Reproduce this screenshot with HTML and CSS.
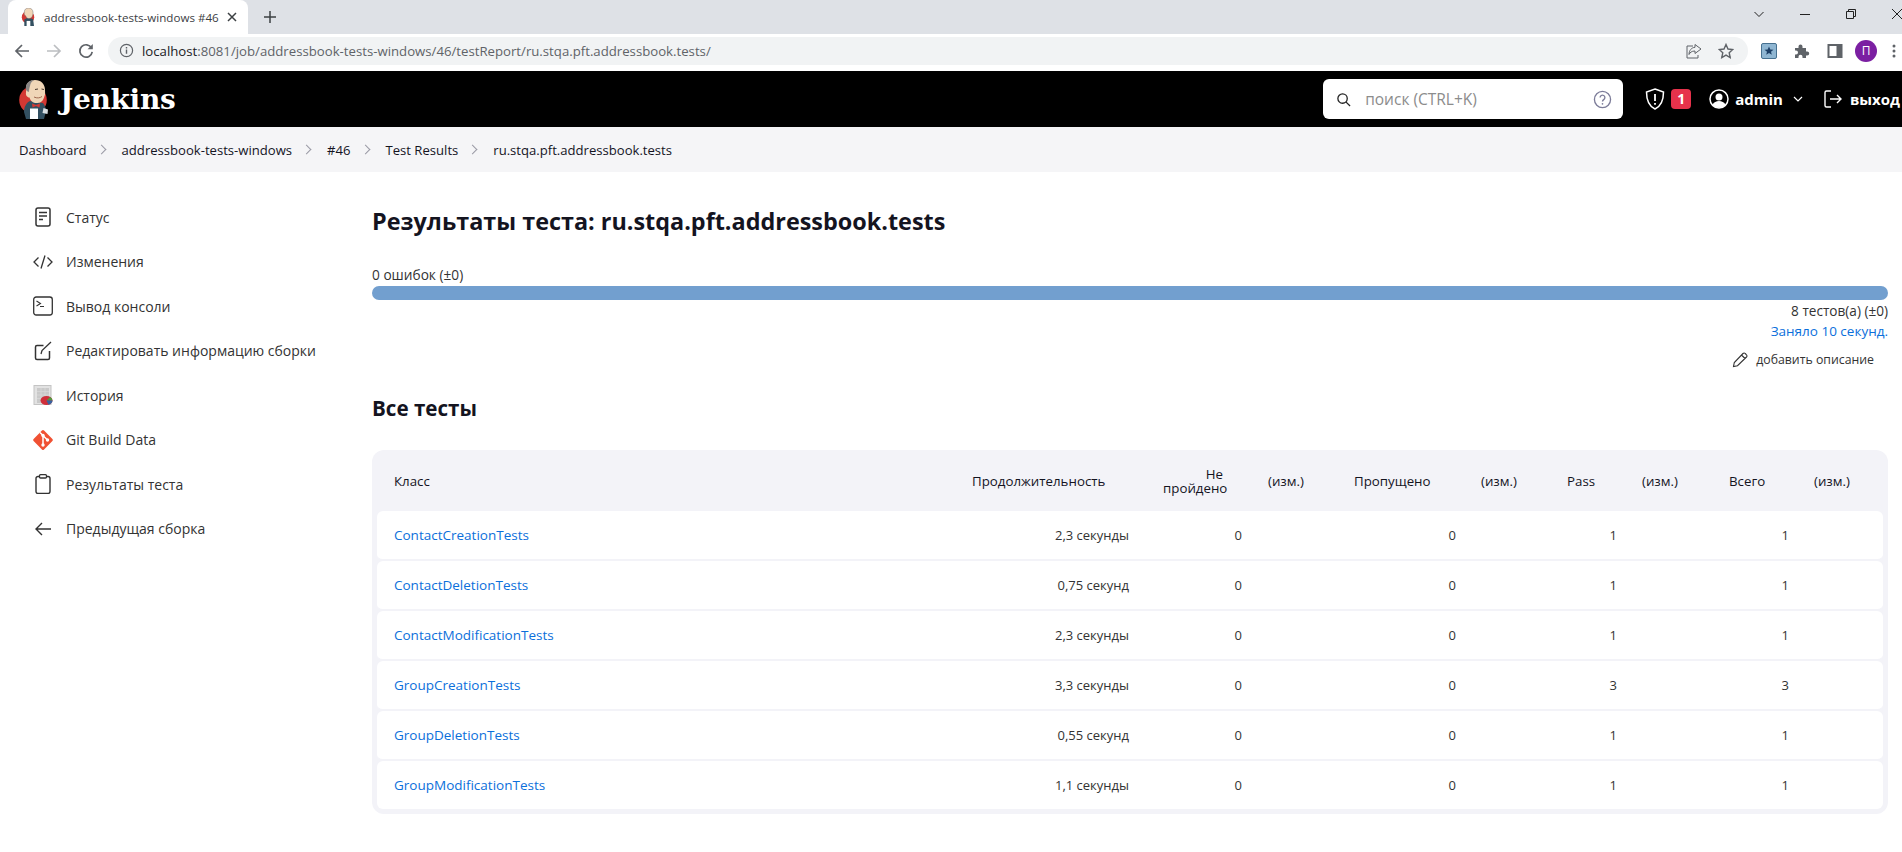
FILE: index.html
```html
<!DOCTYPE html>
<html lang="ru">
  <head>
    <meta charset="UTF-8" />
    <meta name="viewport" content="width=device-width, initial-scale=1.0" />
    <title>addressbook-tests-windows #46</title>
    <link rel="stylesheet" href="styles.css">
  </head>

  <body>
    <!-- browser tab strip -->
    <div class="tabstrip">
      <div class="tab">
        <svg class="favicon" viewBox="0 0 28 39">
          <circle cx="14" cy="20" r="13.500" fill="#d33833"/>
          <path d="M6 39V25l7-4 12 3 2 15z" fill="#335061"/>
          <path d="M6 9c0-6 4-9 9-9 6 0 10 4 10 10 0 7-3 13-9 13-4 0-6-3-7-6-2 0-4-4-3-8z" fill="#f0d6b7" stroke="#6d6b6d"/>
          <path d="M11 28h8v11h-8z" fill="#fff"/>
        </svg>
        <span class="tab-title">addressbook-tests-windows #46</span>
        <svg class="tab-close" viewBox="0 0 10 10"><path d="M1 1l8 8M9 1l-8 8" stroke="#3c4043" stroke-width="1.500"/></svg>
      </div>
      <svg class="tab-new" viewBox="0 0 12 12"><path d="M6 0v12M0 6h12" stroke="#3c4043" stroke-width="1.500"/></svg>
      <div class="window-btns">
        <svg viewBox="0 0 12 12"><path d="M1.500 4L6 8.500 10.500 4" fill="none" stroke="#222"/></svg>
        <svg viewBox="0 0 12 12"><path d="M1 6.500h10" stroke="#222"/></svg>
        <svg viewBox="0 0 12 12"><path d="M1.500 3.500h7v7h-7zM3.500 3.500v-2h7v7h-2" fill="none" stroke="#222"/></svg>
        <svg viewBox="0 0 12 12"><path d="M1 1l10 10M11 1L1 11" stroke="#222"/></svg>
      </div>
    </div>

    <!-- browser toolbar -->
    <div class="toolbar">
      <svg class="nav-btn" viewBox="0 0 16 16"><path d="M15 8H2M8 2L2 8l6 6" fill="none" stroke="#5f6368" stroke-width="1.700"/></svg>
      <svg class="nav-btn" viewBox="0 0 16 16"><path d="M1 8h13M8 2l6 6-6 6" fill="none" stroke="#bcbec1" stroke-width="1.700"/></svg>
      <svg class="nav-btn" viewBox="0 0 16 16"><path d="M13.500 5A6.200 6.200 0 1 0 14.200 8.800" fill="none" stroke="#5f6368" stroke-width="1.700"/><path d="M14.800 1v5.200H9.600z" fill="#5f6368"/></svg>
      <div class="urlbar">
        <svg class="info-icon" viewBox="0 0 16 16"><circle cx="8" cy="8" r="6.500" fill="none" stroke="#5f6368" stroke-width="1.300"/><path d="M8 7v4.500M8 4.300v1.500" stroke="#5f6368" stroke-width="1.500"/></svg>
        <span class="url"><b>localhost</b>:8081/job/addressbook-tests-windows/46/testReport/ru.stqa.pft.addressbook.tests/</span>
        <svg class="url-action" viewBox="0 0 16 16"><path d="M9 1.500L15 6l-6 4.500V8C5.500 8 4 9.500 3 11.500 3 7.500 5.500 4.500 9 4.300zM7 3H1v12h11v-3" fill="none" stroke="#5f6368"/></svg>
        <svg class="url-action" viewBox="0 0 16 16"><path d="M8 1.500l2 4.500 4.800.5-3.600 3.200 1 4.800L8 12.100l-4.200 2.400 1-4.800L1.200 6.500 6 6z" fill="none" stroke="#5f6368" stroke-width="1.400"/></svg>
      </div>
      <div class="ext-icons">
        <svg viewBox="0 0 16 16"><rect x=".5" y=".5" width="15" height="15" rx="1.500" fill="#8fb6d2" stroke="#46708f"/><path d="M8 3.500l1.300 3 3.200.2-2.500 2 .8 3.100L8 10.100l-2.800 1.700.8-3.100-2.500-2 3.200-.2z" fill="#1d3f66"/></svg>
        <svg viewBox="0 0 16 16"><path d="M1 5h3.500V3.500a2 2 0 0 1 4 0V5H12v3.500h1.200a2 2 0 0 1 0 4H12V15H8.500v-1.300a2 2 0 0 0-4 0V15H1v-3.500h1a2 2 0 0 0 0-4H1z" fill="#5f6368"/></svg>
        <svg viewBox="0 0 16 16"><path d="M1.500 2h13v12h-13z" fill="#fff" stroke="#5f6368" stroke-width="2"/><path d="M9.500 2h5v12h-5z" fill="#5f6368"/></svg>
        <span class="avatar">П</span>
        <svg class="dots" viewBox="0 0 4 16"><circle cx="2" cy="3" r="1.500" fill="#5f6368"/><circle cx="2" cy="8" r="1.500" fill="#5f6368"/><circle cx="2" cy="13" r="1.500" fill="#5f6368"/></svg>
      </div>
    </div>

    <!-- jenkins header -->
    <header class="page-header">
      <svg class="logo" viewBox="0 0 30 39">
        <circle cx="14" cy="20" r="13.800" fill="#d33833"/>
        <path d="M5 32c0-5 2-9 6-11l5 1 8 1c2 3 3 5 3 8l-2 8H7z" fill="#335061"/>
        <path d="M7 8C7 3 11 0 16 0c6 0 10 4 10 10 0 3 .5 4-.5 6-1 4-3 7-7 7-4 .5-7-2-8-5.500-2.500 0-4-2.500-3.500-5 0-1.500 0-3 .5-4.500z" fill="#f0d6b7"/>
        <path d="M7 9.500C6 4 10 0 15 0c-2.500 1.500-3.500 3-4 6-.5 1.500-1 4-1 6-1.500-.5-2.500-1-3-2.500z" fill="#8a8684"/>
        <path d="M16 9.500l3-.5M22.500 9l2.500.5" stroke="#4a3b30" stroke-width="1" fill="none"/>
        <path d="M15 17c3 1.500 6 1 8-.5" stroke="#a06a50" stroke-width="1" fill="none"/>
        <path d="M13 23.500l4 1.500 4-1.500-.5 4-3.500-1.500-3.500 1.500z" fill="#d33833"/>
        <path d="M11 28.500h8v10.500h-8z" fill="#fff"/>
        <path d="M24.500 28l4.500 1.500-.5 4.500-5-1z" fill="#d8dde0"/>
      </svg>
      <span class="logo-text">Jenkins</span>
      <div class="search">
        <svg class="search-icon" viewBox="0 0 16 16"><circle cx="7" cy="7" r="5" fill="none" stroke="#222" stroke-width="1.400"/><path d="M10.500 10.500L15 15" stroke="#222" stroke-width="1.400"/></svg>
        <span class="search-hint">поиск (CTRL+K)</span>
        <svg class="help-icon" viewBox="0 0 20 20"><circle cx="10" cy="10" r="8.500" fill="none" stroke="#7c7c99" stroke-width="1.400"/><path d="M7.500 8a2.500 2.500 0 1 1 3.800 2.100c-.9.600-1.300 1-1.300 2" fill="none" stroke="#7c7c99" stroke-width="1.400"/><circle cx="10" cy="14.500" r=".9" fill="#7c7c99"/></svg>
      </div>
      <svg class="head-icon shield" viewBox="0 0 20 22"><path d="M10 1l8.500 3c0 8-2 14-8.500 17C3.500 18 1.500 12 1.500 4z" fill="none" stroke="#fff" stroke-width="1.500"/><path d="M10 6v7M10 15v1.800" stroke="#fff" stroke-width="1.800"/></svg>
      <span class="badge">1</span>
      <svg class="head-icon user-icon" viewBox="0 0 20 20"><circle cx="10" cy="10" r="9" fill="none" stroke="#fff" stroke-width="1.500"/><circle cx="10" cy="8" r="3.500" fill="#fff"/><path d="M3.500 16c1-3 4-4 6.500-4s5.500 1 6.500 4c-3 3.500-10 3.500-13 0z" fill="#fff"/></svg>
      <span class="head-link">admin</span>
      <svg class="user-chevron" viewBox="0 0 10 6"><path d="M1 1l4 4 4-4" fill="none" stroke="#fff" stroke-width="1.200"/></svg>
      <svg class="head-icon logout-icon" viewBox="0 0 20 20"><path d="M8 2H3.500A1.500 1.500 0 0 0 2 3.500v13A1.500 1.500 0 0 0 3.500 18H8M7 10h11M14 6l4 4-4 4" fill="none" stroke="#fff" stroke-width="1.400"/></svg>
      <span class="head-link logout-text">выход</span>
    </header>

    <!-- breadcrumbs -->
    <nav class="breadcrumbs">
      <span>Dashboard</span><i class="crumb-sep"></i>
      <span>addressbook-tests-windows</span><i class="crumb-sep"></i>
      <span>#46</span><i class="crumb-sep"></i>
      <span>Test Results</span><i class="crumb-sep"></i>
      <span>ru.stqa.pft.addressbook.tests</span>
    </nav>

    <div class="page-body">
      <!-- side panel -->
      <aside class="sidebar">
        <div class="task">
          <svg viewBox="0 0 20 20"><rect x="3" y="1" width="14" height="18" rx="2" fill="none" stroke="#333" stroke-width="1.500"/><path d="M6 5.500h8M6 9h8M6 12.500h4" stroke="#333" stroke-width="1.300"/></svg>
          <span>Статус</span>
        </div>
        <div class="task">
          <svg viewBox="0 0 20 20"><path d="M5.500 5.500L1 10l4.500 4.500M14.500 5.500L19 10l-4.500 4.500M12 3.500L8 16.500" fill="none" stroke="#333" stroke-width="1.300"/></svg>
          <span>Изменения</span>
        </div>
        <div class="task">
          <svg viewBox="0 0 20 20"><rect x="0.700" y="1" width="18.600" height="18" rx="2.500" fill="none" stroke="#333" stroke-width="1.300"/><path d="M3.500 5l4 2.500-4 2.500M7 10.500h4" fill="none" stroke="#333" stroke-width="1.100"/></svg>
          <span>Вывод консоли</span>
        </div>
        <div class="task">
          <svg viewBox="0 0 20 20"><path d="M10.500 4.500H4a1.500 1.500 0 0 0-1.500 1.500v11A1.500 1.500 0 0 0 4 18.500h11a1.500 1.500 0 0 0 1.500-1.500v-7" fill="none" stroke="#333" stroke-width="1.500"/><path d="M8 13l1-3.500L18 1" fill="none" stroke="#333" stroke-width="1.300"/></svg>
          <span>Редактировать информацию сборки</span>
        </div>
        <div class="task">
          <svg viewBox="0 0 20 20"><rect x="1" y="0.500" width="17" height="19" fill="#e2e2e2" stroke="#c4c4c4"/><rect x="4" y="3" width="12" height="15" fill="#c9c9c9"/><path d="M4 6.500h12M4 10h12M4 13.500h12M8 3v15M12 3v15" stroke="#dadada" stroke-width=".7"/><ellipse cx="13.500" cy="15.500" rx="6" ry="4.500" fill="#cf2f3a"/><path d="M13.500 15.500L17 11.900A6 4.500 0 0 1 19.500 15.500z" fill="#4f9a3f"/><path d="M13.500 15.500h6A6 4.500 0 0 1 15.500 19.700z" fill="#3465a4"/></svg>
          <span>История</span>
        </div>
        <div class="task task-git">
          <svg viewBox="0 0 22 22"><rect x="3.600" y="3.600" width="14.800" height="14.800" rx="1.500" fill="#f05133" transform="rotate(45 11 11)"/><path d="M8 3.500L15.500 11M11 6.500V16" fill="none" stroke="#fff" stroke-width="1.500"/><circle cx="11" cy="6.500" r="1.700" fill="#fff"/><circle cx="11" cy="16" r="1.700" fill="#fff"/><circle cx="15.500" cy="11" r="1.700" fill="#fff"/></svg>
          <span>Git Build Data</span>
        </div>
        <div class="task">
          <svg viewBox="0 0 20 20"><path d="M6.500 2.500H5A2 2 0 0 0 3 4.500v13a2 2 0 0 0 2 2h10a2 2 0 0 0 2-2v-13a2 2 0 0 0-2-2h-1.500" fill="none" stroke="#333" stroke-width="1.400"/><rect x="6.500" y="0.700" width="7" height="3.300" rx="1" fill="none" stroke="#333" stroke-width="1.300"/></svg>
          <span>Результаты теста</span>
        </div>
        <div class="task">
          <svg viewBox="0 0 20 20"><path d="M18 10H3M9 4l-6 6 6 6" fill="none" stroke="#333" stroke-width="1.400"/></svg>
          <span>Предыдущая сборка</span>
        </div>
      </aside>

      <!-- main content -->
      <main class="content">
        <h1 class="title">Результаты теста: ru.stqa.pft.addressbook.tests</h1>
        <div class="fail-count">0 ошибок (±0)</div>
        <div class="bar"></div>
        <div class="summary">8 тестов(а) (±0)</div>
        <div class="summary"><a class="link" href="#">Заняло 10 секунд.</a></div>
        <div class="description">
          <svg viewBox="0 0 16 16"><path d="M1.500 14.500l.8-4L11 1.500a1.500 1.500 0 0 1 2.200 0l1.300 1.300a1.500 1.500 0 0 1 0 2.200l-9 8.700zM9.500 3l3.500 3.500" fill="none" stroke="#333" stroke-width="1.100"/></svg>
          <span>добавить описание</span>
        </div>

        <h2 class="subtitle">Все тесты</h2>

        <div class="table-wrap">
          <table class="results">
            <colgroup>
              <col class="c-name" /><col class="c-dur" /><col class="c-fail" /><col class="c-diff1" />
              <col class="c-skip" /><col class="c-diff2" /><col class="c-pass" /><col class="c-diff3" />
              <col class="c-total" /><col class="c-diff4" />
            </colgroup>
            <thead>
              <tr>
                <th class="th-name">Класс</th>
                <th>Продолжительность</th>
                <th class="th-fail">Не пройдено</th>
                <th>(изм.)</th>
                <th>Пропущено</th>
                <th>(изм.)</th>
                <th>Pass</th>
                <th>(изм.)</th>
                <th>Всего</th>
                <th>(изм.)</th>
              </tr>
            </thead>
            <tbody>
              <tr>
                <td class="td-name"><a class="link" href="#">ContactCreationTests</a></td>
                <td class="td-dur">2,3 секунды</td><td class="num-fail">0</td><td></td>
                <td class="num">0</td><td></td><td class="num">1</td><td></td><td class="num">1</td><td></td>
              </tr>
              <tr>
                <td class="td-name"><a class="link" href="#">ContactDeletionTests</a></td>
                <td class="td-dur">0,75 секунд</td><td class="num-fail">0</td><td></td>
                <td class="num">0</td><td></td><td class="num">1</td><td></td><td class="num">1</td><td></td>
              </tr>
              <tr>
                <td class="td-name"><a class="link" href="#">ContactModificationTests</a></td>
                <td class="td-dur">2,3 секунды</td><td class="num-fail">0</td><td></td>
                <td class="num">0</td><td></td><td class="num">1</td><td></td><td class="num">1</td><td></td>
              </tr>
              <tr>
                <td class="td-name"><a class="link" href="#">GroupCreationTests</a></td>
                <td class="td-dur">3,3 секунды</td><td class="num-fail">0</td><td></td>
                <td class="num">0</td><td></td><td class="num">3</td><td></td><td class="num">3</td><td></td>
              </tr>
              <tr>
                <td class="td-name"><a class="link" href="#">GroupDeletionTests</a></td>
                <td class="td-dur">0,55 секунд</td><td class="num-fail">0</td><td></td>
                <td class="num">0</td><td></td><td class="num">1</td><td></td><td class="num">1</td><td></td>
              </tr>
              <tr>
                <td class="td-name"><a class="link" href="#">GroupModificationTests</a></td>
                <td class="td-dur">1,1 секунды</td><td class="num-fail">0</td><td></td>
                <td class="num">0</td><td></td><td class="num">1</td><td></td><td class="num">1</td><td></td>
              </tr>
            </tbody>
          </table>
        </div>
      </main>
    </div>
  </body>
</html>
```

FILE: styles.css
```css
* {
  box-sizing: border-box;
}

html,
body {
  height: 100%;
}

body {
  margin: 0;
  overflow: hidden;
  background-color: #fff;
  color: #14141f;
  font-family: "Open Sans", sans-serif;
  font-size: 13px;
}

svg {
  display: block;
  flex-shrink: 0;
}

/* browser chrome */
.tabstrip {
  height: 34px;
  display: flex;
  align-items: flex-start;
  padding-left: 8px;
  background-color: #dee1e6;
}

.tab {
  width: 240px;
  height: 34px;
  display: flex;
  align-items: center;
  padding-left: 13px;
  background-color: #fff;
  border-radius: 8px 8px 0 0;
}

.favicon {
  width: 14px;
  height: 18px;
}

.tab-title {
  width: 175px;
  margin-left: 9px;
  overflow: hidden;
  white-space: nowrap;
  font-size: 11.600px;
  color: #3c4043;
}

.tab-close {
  width: 10px;
  height: 10px;
  margin-left: 8px;
}

.tab-new {
  width: 12px;
  height: 12px;
  margin: 11px 0 0 16px;
}

.window-btns {
  margin-left: auto;
  display: flex;
  gap: 34px;
  padding: 8px 0 0;
  margin-right: -1px;
}

.window-btns svg {
  width: 12px;
  height: 12px;
}

.toolbar {
  height: 37px;
  display: flex;
  align-items: center;
  padding: 0 0 4px 14px;
  background-color: #fff;
}

.nav-btn {
  width: 16px;
  height: 16px;
  margin-right: 16px;
}

.urlbar {
  width: 1640px;
  height: 28px;
  display: flex;
  align-items: center;
  margin-left: -2px;
  padding: 0 14px 0 11px;
  background-color: #f1f3f4;
  border-radius: 14px;
}

.info-icon {
  width: 15px;
  height: 15px;
}

.url {
  margin-left: 8px;
  font-size: 13.200px;
  color: #5f6368;
}

.url b {
  font-weight: 400;
  color: #202124;
}

.url-action {
  width: 16px;
  height: 16px;
  margin-left: 16px;
}

.url + .url-action {
  margin-left: auto;
}

.ext-icons {
  display: flex;
  align-items: center;
  gap: 17px;
  margin-left: 13px;
}

.ext-icons svg {
  width: 16px;
  height: 16px;
}

.avatar {
  width: 22px;
  height: 22px;
  margin-left: -5px;
  border-radius: 50%;
  background-color: #7b1fa2;
  color: #fff;
  font-size: 12px;
  line-height: 22px;
  text-align: center;
}

.ext-icons .dots {
  width: 4px;
  margin-left: -2px;
}

/* jenkins header */
.page-header {
  height: 56px;
  display: flex;
  align-items: center;
  padding-left: 19px;
  background-color: #000;
  color: #fff;
  overflow: hidden;
}

.logo {
  width: 30px;
  height: 39px;
}

.logo-text {
  margin-left: 11px;
  font-family: "DejaVu Serif", serif;
  font-size: 28px;
  font-weight: 700;
  letter-spacing: -.3px;
}

.search {
  width: 300px;
  height: 40px;
  display: flex;
  align-items: center;
  margin-left: auto;
  padding: 0 11px 0 13px;
  background-color: #fff;
  border-radius: 6px;
}

.search-icon {
  width: 15px;
  height: 15px;
}

.search-hint {
  margin-left: 14px;
  font-size: 15.500px;
  color: #8c8c8c;
}

.help-icon {
  width: 19px;
  height: 19px;
  margin-left: auto;
}

.head-icon {
  width: 20px;
  height: 20px;
}

.shield {
  height: 22px;
  margin-left: 22px;
}

.badge {
  width: 20px;
  height: 20px;
  margin-left: 6px;
  border-radius: 4px;
  background-color: #e6324b;
  font-size: 14px;
  font-weight: 700;
  line-height: 20px;
  text-align: center;
}

.user-icon {
  margin-left: 18px;
}

.head-link {
  margin-left: 6px;
  font-size: 15px;
  font-weight: 700;
}

.user-chevron {
  width: 10px;
  height: 6px;
  margin-left: 10px;
}

.logout-icon {
  margin-left: 20px;
}

.logout-text {
  margin-left: 7px;
  margin-right: 2px;
}

/* breadcrumbs */
.breadcrumbs {
  height: 45px;
  display: flex;
  align-items: center;
  padding-left: 19px;
  background-color: #f5f5f7;
  font-size: 13.100px;
  color: #14141f;
}

.crumb-sep {
  width: 7px;
  height: 7px;
  margin: 0 17px 0 11px;
  border-top: 1px solid #9a9aa5;
  border-right: 1px solid #9a9aa5;
  transform: rotate(45deg);
}

/* layout */
.page-body {
  display: flex;
}

.sidebar {
  width: 372px;
  padding: 23px 0 0 33px;
}

.task {
  height: 44.500px;
  display: flex;
  align-items: center;
  gap: 13px;
  font-size: 14px;
  color: #333;
}

.task svg {
  width: 20px;
  height: 20px;
}

.task-git {
  gap: 12px;
}

.task-git svg {
  width: 22px;
  height: 22px;
  margin-left: -1px;
}

.content {
  width: 1516px;
}

.title {
  margin: 34px 0 0;
  font-size: 23.400px;
  font-weight: 700;
  line-height: 30px;
}

.fail-count {
  margin-top: 28px;
  font-size: 13.700px;
  line-height: 22px;
  color: #333;
}

.bar {
  height: 14px;
  background-color: #729fcf;
  border-radius: 7px;
}

.summary {
  margin-top: 2px;
  font-size: 13.600px;
  line-height: 18px;
  text-align: right;
  color: #333;
}

.link {
  color: #0b6fdb;
  font-size: 13.500px;
  font-weight: 500;
  text-decoration: none;
}

.description {
  display: flex;
  justify-content: flex-end;
  align-items: center;
  gap: 8px;
  margin-top: 11px;
  padding-right: 14px;
  font-size: 12.300px;
  line-height: 18px;
  color: #333;
}

.description svg {
  width: 16px;
  height: 16px;
}

.subtitle {
  margin: 25px 0 0;
  font-size: 20.600px;
  font-weight: 700;
  line-height: 28px;
}

/* results table */
.table-wrap {
  margin-top: 28px;
  padding: 0 5px 5px;
  background-color: #f3f3f8;
  border-radius: 12px;
}

.results {
  width: 1506px;
  table-layout: fixed;
  border-collapse: separate;
  border-spacing: 0;
}

.c-name { width: 581px; }
.c-dur { width: 205px; }
.c-fail { width: 91px; }
.c-diff1 { width: 86px; }
.c-skip { width: 127px; }
.c-diff2 { width: 86px; }
.c-pass { width: 75px; }
.c-diff3 { width: 87px; }
.c-total { width: 85px; }
.c-diff4 { width: 83px; }

.results th {
  height: 61px;
  padding: 0 0 0 14px;
  font-weight: 400;
  font-size: 13.300px;
  line-height: 14px;
  text-align: left;
  color: #14141f;
}

.results .th-name {
  padding-left: 17px;
}

.results .th-fail {
  padding: 0 31px 0 0;
  text-align: right;
}

.results td {
  height: 50px;
  padding: 0;
  background-color: #fff;
  font-size: 13px;
  border-bottom: 2px solid #f3f3f8;
  color: #333;
}

.results tbody tr:last-child td {
  height: 48px;
  border-bottom: 0;
}

.results td:first-child {
  border-radius: 6px 0 0 6px;
}

.results td:last-child {
  border-radius: 0 6px 6px 0;
}

.results .td-name {
  padding-left: 17px;
}

.results .td-dur {
  padding-right: 34px;
  text-align: right;
}

.results .num-fail {
  padding-right: 12px;
  text-align: right;
}

.results .num {
  padding-right: 11px;
  text-align: right;
}
```
